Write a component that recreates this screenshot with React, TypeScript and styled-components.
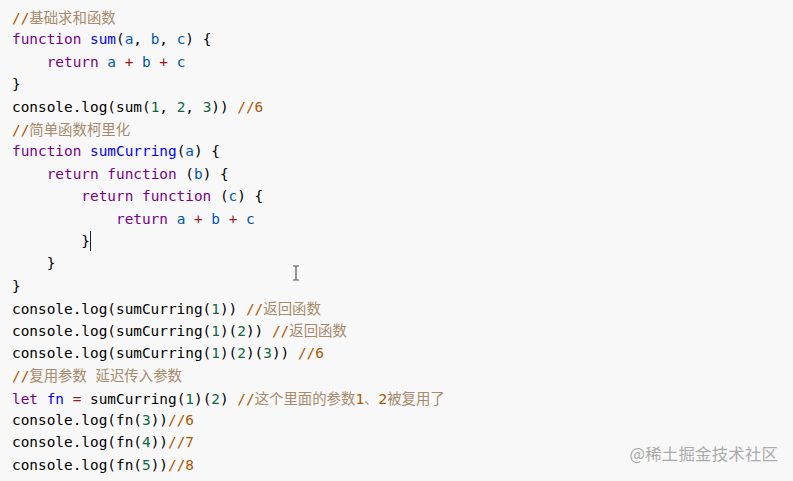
import React from "react";
import styled, { createGlobalStyle } from "styled-components";

const Global = createGlobalStyle`
  html, body { margin: 0; padding: 0; background: #f8f8f8; }
  body { width: 793px; height: 481px; overflow: hidden; }
`;

const Page = styled.div`
  position: relative;
  width: 793px;
  height: 481px;
  background: #f8f8f8;
`;

const Code = styled.pre`
  margin: 0;
  padding: 6px 12px;
  font-family: "DejaVu Sans Mono", "Noto Sans CJK SC", monospace;
  font-size: 14.4px;
  line-height: 22.4px;
  color: #000;
  white-space: pre;
`;

const Line = styled.div`
  height: 22.4px;
`;

type Kind = "kw" | "def" | "var" | "op" | "num" | "com" | "plain";

const colors: Record<Kind, string> = {
  kw: "#770088",
  def: "#0000ff",
  var: "#0055aa",
  op: "#981a1a",
  num: "#116644",
  com: "#aa5500",
  plain: "#000000",
};

const Tok = styled.span<{ $k: Kind }>`
  color: ${(p) => colors[p.$k]};
`;

const CjkComment = styled.span`
  font-family: "Noto Sans CJK SC", sans-serif;
  font-size: 14.4px;
  color: #a78a6c;
`;

const Caret = styled.span`
  display: inline-block;
  width: 0;
  height: 20px;
  border-left: 1px solid #222;
  vertical-align: -5px;
`;

const Watermark = styled.div`
  position: absolute;
  right: 15px;
  bottom: 16px;
  font-family: "Noto Sans CJK SC", sans-serif;
  font-size: 16.4px;
  color: #ababab;
  letter-spacing: 0.2px;
`;

const Beam = styled.svg`
  position: absolute;
  left: 292px;
  top: 265px;
`;

type T = [Kind, string] | ["cjk", string] | ["caret", string];

const k = (s: string): T => ["kw", s];
const d = (s: string): T => ["def", s];
const v = (s: string): T => ["var", s];
const o = (s: string): T => ["op", s];
const n = (s: string): T => ["num", s];
const c = (s: string): T => ["com", s];
const p = (s: string): T => ["plain", s];
const z = (s: string): T => ["cjk", s];

const lines: T[][] = [
  [c("//"), z("基础求和函数")],
  [k("function"), p(" "), d("sum"), p("("), v("a"), p(", "), v("b"), p(", "), v("c"), p(") {")],
  [p("    "), k("return"), p(" "), v("a"), p(" "), o("+"), p(" "), v("b"), p(" "), o("+"), p(" "), v("c")],
  [p("}")],
  [p("console.log(sum("), n("1"), p(", "), n("2"), p(", "), n("3"), p(")) "), c("//6")],
  [c("//"), z("简单函数柯里化")],
  [k("function"), p(" "), d("sumCurring"), p("("), v("a"), p(") {")],
  [p("    "), k("return"), p(" "), k("function"), p(" ("), v("b"), p(") {")],
  [p("        "), k("return"), p(" "), k("function"), p(" ("), v("c"), p(") {")],
  [p("            "), k("return"), p(" "), v("a"), p(" "), o("+"), p(" "), v("b"), p(" "), o("+"), p(" "), v("c")],
  [p("        }"), ["caret", ""]],
  [p("    }")],
  [p("}")],
  [p("console.log(sumCurring("), n("1"), p(")) "), c("//"), z("返回函数")],
  [p("console.log(sumCurring("), n("1"), p(")("), n("2"), p(")) "), c("//"), z("返回函数")],
  [p("console.log(sumCurring("), n("1"), p(")("), n("2"), p(")("), n("3"), p(")) "), c("//6")],
  [c("//"), z("复用参数"), c(" "), z("延迟传入参数")],
  [k("let"), p(" "), d("fn"), p(" "), o("="), p(" sumCurring("), n("1"), p(")("), n("2"), p(") "), c("//"), z("这个里面的参数"), c("1"), z("、"), c("2"), z("被复用了")],
  [p("console.log(fn("), n("3"), p("))"), c("//6")],
  [p("console.log(fn("), n("4"), p("))"), c("//7")],
  [p("console.log(fn("), n("5"), p("))"), c("//8")],
];

export default function App() {
  return (
    <Page>
      <Global />
      <Code>
        {lines.map((line, i) => (
          <Line key={i}>
            {line.map(([kind, text], j) =>
              kind === "cjk" ? (
                <CjkComment key={j}>{text}</CjkComment>
              ) : kind === "caret" ? (
                <Caret key={j} />
              ) : (
                <Tok key={j} $k={kind as Kind}>
                  {text}
                </Tok>
              )
            )}
          </Line>
        ))}
      </Code>
      <Beam width="8" height="16" viewBox="0 0 8 16">
        <path d="M1 1h6M4 1v14M1 15h6" stroke="#555" strokeWidth="1.2" fill="none" />
      </Beam>
      <Watermark>@稀土掘金技术社区</Watermark>
    </Page>
  );
}
